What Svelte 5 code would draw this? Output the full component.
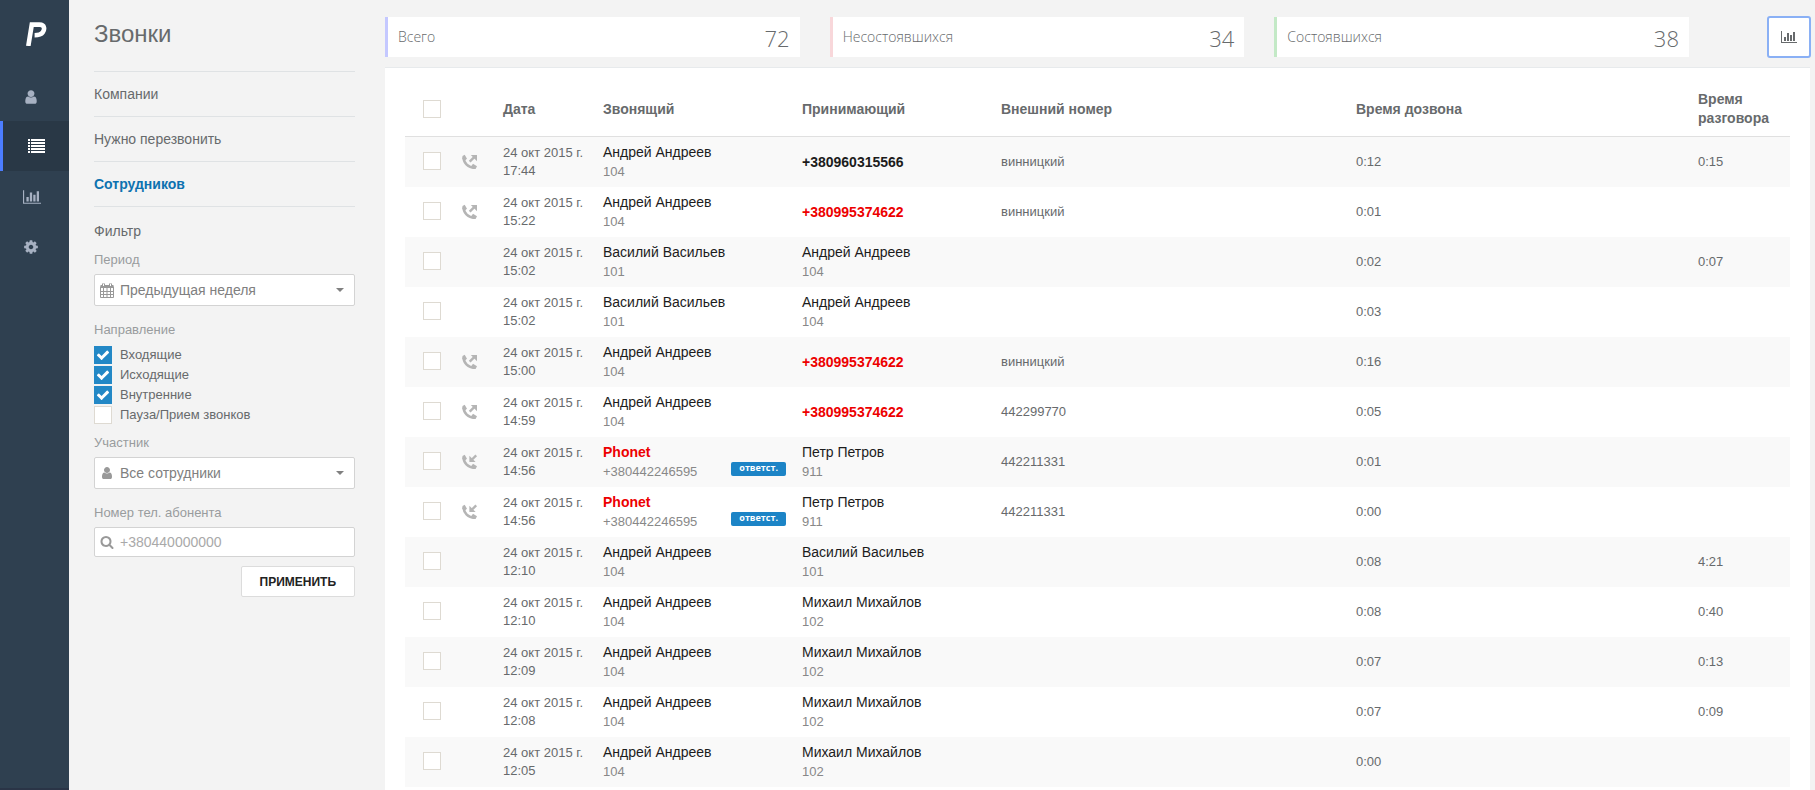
<script>
  const paths = {
    user: 'M1536 1399q0 109-62.5 187t-150.5 78h-854q-88 0-150.5-78t-62.5-187q0-85 8.5-160.5t31.5-152 58.5-131 94-89 134.5-34.5q131 128 313 128t313-128q76 0 134.5 34.5t94 89 58.5 131 31.5 152 8.5 160.5zm-256-887q0 159-112.5 271.5t-271.5 112.5-271.5-112.5-112.5-271.5 112.5-271.5 271.5-112.5 271.5 112.5 112.5 271.5z',
    cog: 'M1152 896q0-106-75-181t-181-75-181 75-75 181 75 181 181 75 181-75 75-181zm512-109v222q0 12-8 23t-20 13l-185 28q-19 54-39 91 35 50 107 138 10 12 10 25t-9 23q-27 37-99 108t-94 71q-12 0-26-9l-138-108q-44 23-91 38-16 136-29 186-7 28-36 28h-222q-14 0-24.5-8.5t-11.5-21.5l-28-184q-49-16-90-37l-141 107q-10 9-25 9-14 0-25-11-126-114-165-168-7-10-7-23 0-12 8-23 15-21 51-66.5t54-70.5q-27-50-41-99l-183-27q-13-2-21-12.5t-8-23.5v-222q0-12 8-23t19-13l186-28q14-46 39-92-40-57-107-138-10-12-10-24 0-10 9-23 26-36 98.5-107.5t94.5-71.5q13 0 26 10l138 107q44-23 91-38 16-136 29-186 7-28 36-28h222q14 0 24.5 8.5t11.5 21.5l28 184q49 16 90 37l142-107q9-9 24-9 13 0 25 10 129 119 165 170 7 8 7 22 0 12-8 23-15 21-51 66.5t-54 70.5q26 50 41 98l183 28q13 2 21 12.5t8 23.5z',
    search: 'M1216 832q0-185-131.5-316.5t-316.5-131.5-316.5 131.5-131.5 316.5 131.5 316.5 316.5 131.5 316.5-131.5 131.5-316.5zm512 832q0 52-38 90t-90 38q-54 0-90-38l-343-342q-179 124-399 124-143 0-273.5-55.5t-225-150-150-225-55.5-273.5 55.5-273.5 150-225 225-150 273.5-55.5 273.5 55.5 225 150 150 225 55.5 273.5q0 220-124 399l343 343q37 37 37 90z',
    chart: 'M640 896v512h-256v-512h256zm384-512v1024h-256v-1024h256zm1024 1152v128h-2048v-1536h128v1408h1920zm-640-896v768h-256v-768h256zm384-384v1152h-256v-1152h256z',
    check: 'M1671 566q0 40-28 68l-724 724-136 136q-28 28-68 28t-68-28l-136-136-362-362q-28-28-28-68t28-68l136-136q28-28 68-28t68 28l294 295 656-657q28-28 68-28t68 28l136 136q28 28 28 68z'
  };

  const sections = [
    { label: 'Компании' },
    { label: 'Нужно перезвонить' },
    { label: 'Сотрудников', active: true }
  ];

  let directions = $state([
    { label: 'Входящие', on: true },
    { label: 'Исходящие', on: true },
    { label: 'Внутренние', on: true },
    { label: 'Пауза/Прием звонков', on: false }
  ]);

  const stats = [
    { label: 'Всего', value: 72, tone: 'blue' },
    { label: 'Несостоявшихся', value: 34, tone: 'red' },
    { label: 'Состоявшихся', value: 38, tone: 'green' }
  ];

  const andrey = { name: 'Андрей Андреев', sub: '104' };
  const vasily = { name: 'Василий Васильев', sub: '101' };
  const mikhail = { name: 'Михаил Михайлов', sub: '102' };
  const petr = { name: 'Петр Петров', sub: '911' };
  const phonet = { name: 'Phonet', sub: '+380442246595', missed: true, tag: 'ответст.' };
  const missedNumber = { name: '+380995374622', missed: true };

  const calls = [
    { dir: 'out', time: '17:44', from: andrey, to: { name: '+380960315566', strong: true }, ext: 'винницкий', ring: '0:12', talk: '0:15' },
    { dir: 'out', time: '15:22', from: andrey, to: missedNumber, ext: 'винницкий', ring: '0:01' },
    { time: '15:02', from: vasily, to: andrey, ring: '0:02', talk: '0:07' },
    { time: '15:02', from: vasily, to: andrey, ring: '0:03' },
    { dir: 'out', time: '15:00', from: andrey, to: missedNumber, ext: 'винницкий', ring: '0:16' },
    { dir: 'out', time: '14:59', from: andrey, to: missedNumber, ext: '442299770', ring: '0:05' },
    { dir: 'in', time: '14:56', from: phonet, to: petr, ext: '442211331', ring: '0:01' },
    { dir: 'in', time: '14:56', from: phonet, to: petr, ext: '442211331', ring: '0:00' },
    { time: '12:10', from: andrey, to: vasily, ring: '0:08', talk: '4:21' },
    { time: '12:10', from: andrey, to: mikhail, ring: '0:08', talk: '0:40' },
    { time: '12:09', from: andrey, to: mikhail, ring: '0:07', talk: '0:13' },
    { time: '12:08', from: andrey, to: mikhail, ring: '0:07', talk: '0:09' },
    { time: '12:05', from: andrey, to: mikhail, ring: '0:00' }
  ];
</script>

{#snippet icon(name, size)}
  <svg width={name === 'chart' ? (size * 8) / 7 : size} height={size} viewBox={name === 'chart' ? '0 0 2048 1792' : '0 0 1792 1792'} fill="currentColor" aria-hidden="true"><path d={paths[name]} /></svg>
{/snippet}

{#snippet party(p)}
  <div class="name" class:missed={p.missed} class:strong={p.strong}>{p.name}</div>
  {#if p.sub}
    <div class="sub"><span>{p.sub}</span>{#if p.tag}<span class="tag">{p.tag}</span>{/if}</div>
  {/if}
{/snippet}

<div class="page">
  <nav class="rail">
    <a class="logo" href="#home" aria-label="Phonet">
      <svg width="22" height="24" viewBox="0 0 22 24" fill="none" stroke="#fff" stroke-width="4.600" aria-hidden="true">
        <path d="M3.300 24 L6.800 2.600 H14.500 C20 2.600 19.800 7.500 17.700 10.400 C16.200 12.500 14 13.200 9.600 13.200" />
      </svg>
    </a>
    <a href="#users" aria-label="Пользователи">{@render icon('user', 16)}</a>
    <a href="#calls" class="active" aria-label="Звонки">
      <svg width="17" height="14" viewBox="0 0 17 14" fill="currentColor" aria-hidden="true">
        <path d="M0 0h2v2H0zM3 0h14v2H3zM0 3h2v2H0zM3 3h14v2H3zM0 6h2v2H0zM3 6h14v2H3zM0 9h2v2H0zM3 9h14v2H3zM0 12h2v2H0zM3 12h14v2H3z" />
      </svg>
    </a>
    <a href="#stats" aria-label="Статистика">{@render icon('chart', 16)}</a>
    <a href="#settings" aria-label="Настройки">{@render icon('cog', 16)}</a>
  </nav>

  <aside class="side">
    <h1>Звонки</h1>
    <ul class="sections">
      {#each sections as s}
        <li><a href="#section" class:current={s.active}>{s.label}</a></li>
      {/each}
    </ul>

    <form class="filter" onsubmit={(e) => e.preventDefault()}>
      <h2>Фильтр</h2>

      <label class="caption" for="period">Период</label>
      <div class="field">
        <span class="glyph">
          <svg width="14" height="15" viewBox="0 0 14 15" fill="none" stroke="currentColor" aria-hidden="true">
            <path d="M.5 3.5h13v11H.5zM.5 2.5h13M3.5 5v9.500M7 5v9.500M10.500 5v9.500M.5 8.500h13M.5 11.500h13" />
            <path d="M0 4.500h14" />
            <path d="M3.500 .5v3M10.500 .5v3" stroke-width="3" />
            <path d="M3.500 1v2M10.500 1v2" stroke="#fff" />
          </svg>
        </span>
        <select id="period"><option>Предыдущая неделя</option></select>
        <span class="caret"></span>
      </div>

      <fieldset>
        <legend class="caption">Направление</legend>
        {#each directions as d}
          <label class="tick">
            <input type="checkbox" bind:checked={d.on} />
            <span class="box">{#if d.on}{@render icon('check', 14)}{/if}</span>
            {d.label}
          </label>
        {/each}
      </fieldset>

      <label class="caption" for="member">Участник</label>
      <div class="field">
        <span class="glyph">{@render icon('user', 14)}</span>
        <select id="member"><option>Все сотрудники</option></select>
        <span class="caret"></span>
      </div>

      <label class="caption" for="phone">Номер тел. абонента</label>
      <div class="field short">
        <span class="glyph">{@render icon('search', 14)}</span>
        <input id="phone" type="text" placeholder="+380440000000" />
      </div>

      <button class="apply" type="submit">ПРИМЕНИТЬ</button>
    </form>
  </aside>

  <main>
    <div class="top">
      <div class="stats">
        {#each stats as s}
          <div class="stat {s.tone}"><span>{s.label}</span><b>{s.value}</b></div>
        {/each}
      </div>
      <button class="toggle" aria-label="График">{@render icon('chart', 14)}</button>
    </div>

    <div class="panel">
      <table>
        <colgroup>
          <col class="c-check" /><col class="c-icon" /><col class="c-date" /><col class="c-party" /><col class="c-party" /><col class="c-ext" /><col /><col class="c-talk" />
        </colgroup>
        <thead>
          <tr>
            <th class="check"><input type="checkbox" aria-label="Выбрать все" /></th>
            <th></th>
            <th>Дата</th>
            <th>Звонящий</th>
            <th>Принимающий</th>
            <th>Внешний номер</th>
            <th>Время дозвона</th>
            <th>Время разговора</th>
          </tr>
        </thead>
        <tbody>
          {#each calls as c}
            <tr>
              <td class="check"><input type="checkbox" aria-label="Выбрать звонок {c.time}" /></td>
              <td class="dir">
                {#if c.dir}
                  <svg width="16" height="16" viewBox="0 0 16 16" fill="none" stroke="currentColor" aria-hidden="true">
                    <path d="M1.600 3.500 C1.800 9 6 13.600 12.500 13.700" stroke-width="2.600" />
                    <path d="M2.700 .8 L5 4.800 L2.900 6.500 L.3 5 L.5 2z M15 12.200 L11 9.800 L9.200 12.200 L10.800 15 L13.600 14.900z" fill="currentColor" stroke="none" />
                    {#if c.dir === 'out'}
                      <path d="M7.700 7.700 L12.500 2.900" stroke-width="2.400" />
                      <path d="M8.800 1 H15 V7.200z" fill="currentColor" stroke="none" />
                    {:else}
                      <path d="M14.200 1.400 L9.500 6" stroke-width="2.400" />
                      <path d="M7.400 1.800 V8 H13.600z" fill="currentColor" stroke="none" />
                    {/if}
                  </svg>
                {/if}
              </td>
              <td class="date">24 окт 2015 г.<br />{c.time}</td>
              <td class="party">{@render party(c.from)}</td>
              <td class="party">{@render party(c.to)}</td>
              <td>{c.ext ?? ''}</td>
              <td>{c.ring}</td>
              <td>{c.talk ?? ''}</td>
            </tr>
          {/each}
        </tbody>
      </table>
    </div>
  </main>
</div>

<style>
  :global(body) {
    background: #f3f3f3;
  }
  .page {
    display: flex;
    height: 100vh;
    overflow: hidden;
    font: 14px/20px 'Liberation Sans', Arial, sans-serif;
    color: #676a6c;
    background: #f3f3f3;
  }
  .page :global(svg) {
    display: block;
  }
  a {
    color: inherit;
    text-decoration: none;
  }

  .rail {
    flex: 0 0 69px;
    box-sizing: border-box;
    background: #2f4050;
    border-bottom: 2px solid #2a3446;
    color: #a7b1c2;
  }
  .rail a {
    display: flex;
    align-items: center;
    box-sizing: border-box;
    height: 50px;
    padding: 2px 0 0 23px;
  }
  .rail a.logo {
    height: 71px;
    padding: 0 0 3px 25px;
  }
  .rail a.active {
    background: #293846;
    border-left: 3px solid #4c7dff;
    color: #fff;
    padding: 0 0 0 25px;
  }

  .side {
    flex: 0 0 261px;
    padding: 0 30px 0 25px;
  }
  h1 {
    margin: 0;
    padding: 19px 0 22px;
    font-size: 24px;
    line-height: 30px;
    font-weight: 400;
  }
  .sections {
    list-style: none;
    margin: 0;
    padding: 0;
    border-top: 1px solid #dfe2e4;
  }
  .sections li {
    border-bottom: 1px solid #dfe2e4;
  }
  .sections a {
    display: block;
    line-height: 44px;
  }
  .sections a.current {
    color: #0d72b0;
    font-weight: 700;
  }
  h2 {
    margin: 14px 0 9px;
    font-size: 14px;
    line-height: 20px;
    font-weight: 400;
  }
  .caption {
    display: block;
    padding: 0;
    font-size: 13px;
    line-height: 20px;
    color: #999c9e;
  }
  .field {
    display: flex;
    align-items: center;
    height: 30px;
    margin: 4px 0 14px;
    border: 1px solid #d3d3d3;
    border-radius: 2px;
    background: #fff;
    color: #888;
  }
  .field.short {
    height: 28px;
    margin-bottom: 9px;
  }
  .glyph {
    width: 14px;
    padding: 0 6px 0 5px;
    color: #999;
  }
  .field select,
  .field input {
    appearance: none;
    flex: 1;
    min-width: 0;
    height: 100%;
    padding: 0;
    border: 0;
    outline: 0;
    background: transparent;
    font: inherit;
    color: #808080;
  }
  .field input::placeholder {
    color: #a9a9a9;
  }
  .caret {
    margin-right: 10px;
    border: 4px solid transparent;
    border-top-color: #808080;
    border-bottom: 0;
    pointer-events: none;
  }
  fieldset {
    margin: 0 0 8px;
    padding: 0;
    border: 0;
  }
  legend {
    margin-bottom: 5px;
  }
  .tick {
    position: relative;
    display: flex;
    align-items: center;
    gap: 8px;
    font-size: 13px;
  }
  .tick input {
    position: absolute;
    opacity: 0;
    margin: 0;
  }
  .box {
    display: flex;
    align-items: center;
    justify-content: center;
    box-sizing: border-box;
    width: 18px;
    height: 18px;
    border: 1px solid #dedad2;
    background: #fff;
    color: #fff;
  }
  .tick input:checked + .box {
    background: #2388c6;
    border-color: #2388c6;
  }
  .apply {
    display: block;
    height: 31px;
    margin-left: auto;
    padding: 0 18px;
    border: 1px solid #dcdcdc;
    border-radius: 2px;
    background: #fff;
    font: 700 12px/20px 'Liberation Sans', Arial, sans-serif;
    color: #222;
  }

  main {
    flex: 1;
    min-width: 0;
    display: flex;
    flex-direction: column;
    padding: 16px 5px 0 0;
  }
  .top {
    display: flex;
    align-items: center;
    justify-content: space-between;
    gap: 78px;
    margin-bottom: 9px;
  }
  .stats {
    flex: 1;
    display: grid;
    grid-template-columns: repeat(3, 1fr);
    gap: 30px;
  }
  .stat {
    display: flex;
    align-items: center;
    justify-content: space-between;
    height: 40px;
    padding: 0 10px;
    border-left: 3px solid;
    background: #fff;
    font-family: 'Open Sans', sans-serif;
    font-weight: 300;
  }
  .stat.blue {
    border-color: #c4c8ff;
  }
  .stat.red {
    border-color: #f8d7da;
  }
  .stat.green {
    border-color: #c3e9c6;
  }
  .stat b {
    padding-top: 2px;
    font-size: 22px;
    font-weight: 300;
  }
  .toggle {
    display: flex;
    align-items: center;
    justify-content: center;
    width: 44px;
    height: 42px;
    margin-right: -1px;
    padding: 0;
    border: 2px solid #8ab0f5;
    border-radius: 3px;
    background: #fff;
    color: #676a6c;
  }

  .panel {
    flex: 1;
    min-height: 0;
    overflow: hidden;
    padding: 16px 20px 0;
    border-top: 1px solid #e7eaec;
    background: #fff;
  }
  table {
    width: 100%;
    table-layout: fixed;
    border-collapse: separate;
    border-spacing: 0;
    font-size: 13px;
    line-height: 18px;
  }
  .c-check {
    width: 50px;
  }
  .c-icon {
    width: 40px;
  }
  .c-date,
  .c-talk {
    width: 100px;
  }
  .c-party {
    width: 199px;
  }
  .c-ext {
    width: 355px;
  }
  th {
    height: 50px;
    padding: 0 8px 2px;
    border-bottom: 1px solid #e0e0e0;
    font-size: 14px;
    line-height: 19px;
    text-align: left;
    vertical-align: middle;
  }
  td {
    height: 50px;
    padding: 0 0 0 8px;
    vertical-align: middle;
  }
  tbody tr:nth-child(odd) {
    background: #f9f9f9;
  }
  .check {
    padding: 0 0 3px 18px;
    box-sizing: border-box;
  }
  th.check {
    height: 53px;
  }
  .check input {
    appearance: none;
    display: block;
    box-sizing: border-box;
    width: 18px;
    height: 18px;
    margin: 0;
    border: 1px solid #dedad2;
    background: #fff;
  }
  td.dir {
    color: #b5b5b5;
    padding-left: 7px;
  }
  td.party {
    padding-right: 8px;
  }
  .name {
    font-size: 14px;
    line-height: 20px;
    color: #1c1c1c;
  }
  .name.strong,
  .name.missed {
    font-weight: 700;
  }
  .name.missed {
    color: #ed0000;
  }
  .sub {
    display: flex;
    align-items: flex-start;
    justify-content: space-between;
    line-height: 20px;
    color: #888;
  }
  .tag {
    height: 14px;
    padding: 0 8px;
    border-radius: 2px;
    background: #1c84c6;
    color: #fff;
    font: 700 9px/12px 'Open Sans', sans-serif;
  }
</style>
